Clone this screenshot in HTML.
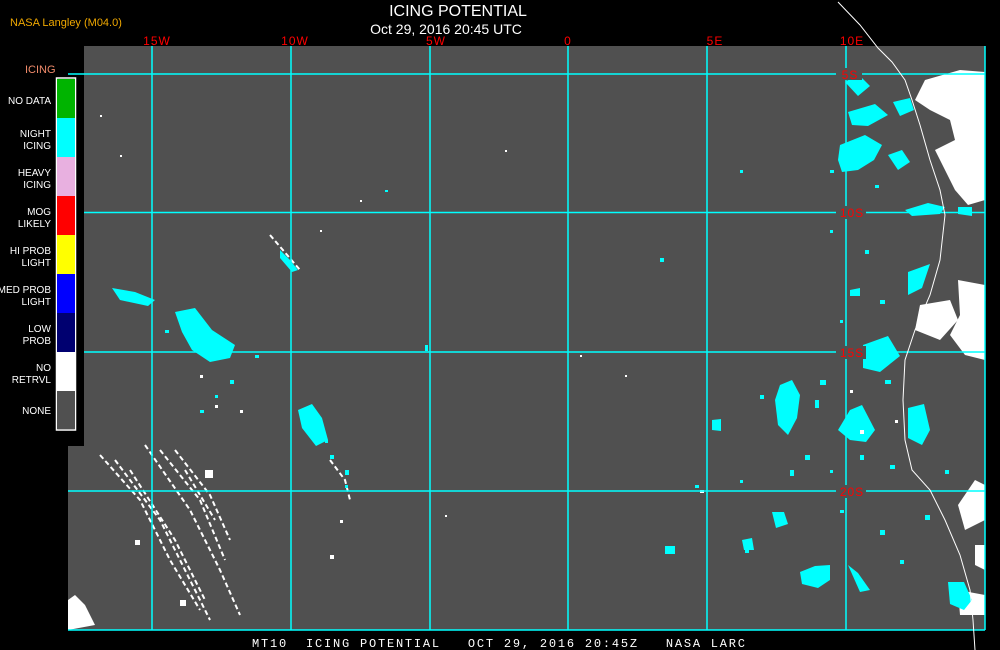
<!DOCTYPE html>
<html><head><meta charset="utf-8"><style>
html,body{margin:0;padding:0;background:#000;width:1000px;height:650px;overflow:hidden}
svg{display:block}
text{font-family:"Liberation Sans",sans-serif}
</style></head><body>
<svg width="1000" height="650" viewBox="0 0 1000 650" xmlns="http://www.w3.org/2000/svg">
<rect width="1000" height="650" fill="#000"/>
<path d="M84 46 H985 V630 H68 V446 H84 Z" fill="#505050"/>
<g fill="#fff">
<path d="M925 80 L960 70 L985 72 L985 200 L968 205 L955 190 L945 170 L935 150 L955 140 L950 120 L930 110 L915 100 Z"/>
<path d="M958 280 L985 285 L985 360 L965 355 L950 335 L960 315 Z"/>
<path d="M920 305 L950 300 L958 320 L940 340 L915 330 Z"/>
<path d="M975 480 L985 485 L985 520 L965 530 L958 505 Z"/>
<path d="M975 545 L985 545 L985 570 L975 565 Z"/>
<path d="M958 590 L985 595 L985 615 L960 615 Z"/>
<path d="M68 600 L75 595 L85 605 L95 625 L68 630 Z"/>
</g>
<g stroke="#fff" stroke-width="2" fill="none" stroke-dasharray="5 3">
<path d="M100 455 L140 500 L170 560 L200 610"/>
<path d="M115 460 L160 520 L190 580 L210 620"/>
<path d="M145 445 L190 510 L220 570 L240 615"/>
<path d="M160 450 L200 500 L225 560"/>
<path d="M130 470 L175 540 L205 600"/>
<path d="M185 470 L215 520"/>
<path d="M175 450 L210 495 L230 540"/>
<path d="M270 235 L300 270"/>
<path d="M955 330 L985 300"/>
<path d="M330 460 L345 480 L350 500"/>
</g>
<g fill="#0ff">
<path d="M298 410 L312 404 L322 418 L328 440 L316 446 L302 428 Z"/>
<path d="M780 385 L792 380 L800 395 L797 418 L788 435 L778 425 L775 400 Z"/>
<path d="M838 430 L850 410 L862 405 L875 430 L866 442 L850 440 Z"/>
<path d="M800 572 L815 566 L830 565 L830 580 L818 588 L802 584 Z"/>
<path d="M845 82 L858 74 L870 86 L858 96 Z"/>
<path d="M848 112 L875 104 L888 115 L868 126 L852 125 Z"/>
<path d="M840 145 L865 135 L882 145 L874 160 L858 170 L842 172 L838 160 Z"/>
<path d="M888 155 L902 150 L910 162 L898 170 Z"/>
<path d="M893 102 L910 98 L914 110 L900 116 Z"/>
<path d="M905 210 L928 203 L945 207 L940 214 L912 216 Z"/>
<path d="M958 207 L972 207 L972 216 L958 214 Z"/>
<path d="M908 272 L930 264 L922 288 L908 295 Z"/>
<path d="M863 345 L888 336 L900 356 L880 372 L863 368 Z"/>
<path d="M908 408 L924 404 L930 430 L922 445 L908 438 Z"/>
<path d="M772 512 L784 512 L788 524 L776 528 Z"/>
<path d="M742 540 L752 538 L754 550 L744 550 Z"/>
<path d="M848 565 L858 573 L870 590 L860 592 Z"/>
<path d="M948 582 L964 582 L972 600 L964 610 L950 604 Z"/>
<path d="M175 312 L195 308 L212 330 L235 345 L230 358 L210 362 L192 350 L182 332 Z"/>
<path d="M112 288 L135 292 L155 300 L148 306 L120 300 Z"/>
<path d="M665 546 L675 546 L675 554 L665 554 Z"/>
<path d="M712 420 L721 419 L721 431 L712 430 Z"/>
<path d="M280 250 L290 260 L298 270 L292 272 L280 258 Z"/>
<path d="M850 290 L860 288 L860 296 L850 296 Z"/>
</g>
<g fill="#0ff">
<rect x="820" y="380" width="6" height="5"/><rect x="815" y="400" width="4" height="8"/><rect x="760" y="395" width="4" height="4"/>
<rect x="805" y="455" width="5" height="5"/><rect x="830" y="470" width="3" height="3"/><rect x="885" y="380" width="6" height="4"/>
<rect x="890" y="465" width="5" height="4"/><rect x="860" y="455" width="4" height="5"/><rect x="740" y="480" width="3" height="3"/>
<rect x="790" y="470" width="4" height="6"/><rect x="840" y="510" width="4" height="3"/><rect x="880" y="530" width="5" height="5"/>
<rect x="900" y="560" width="4" height="4"/><rect x="925" y="515" width="5" height="5"/><rect x="945" y="470" width="4" height="4"/>
<rect x="865" y="250" width="4" height="4"/><rect x="880" y="300" width="5" height="4"/><rect x="840" y="320" width="3" height="3"/>
<rect x="830" y="230" width="3" height="3"/><rect x="875" y="185" width="4" height="3"/><rect x="830" y="170" width="4" height="3"/>
<rect x="230" y="380" width="4" height="4"/><rect x="215" y="395" width="3" height="3"/><rect x="200" y="410" width="4" height="3"/>
<rect x="255" y="355" width="4" height="3"/><rect x="165" y="330" width="4" height="3"/><rect x="330" y="455" width="4" height="4"/>
<rect x="345" y="470" width="4" height="5"/><rect x="345" y="485" width="3" height="3"/><rect x="325" y="440" width="3" height="3"/>
<rect x="660" y="258" width="4" height="4"/><rect x="385" y="190" width="3" height="2"/><rect x="740" y="170" width="3" height="3"/>
<rect x="425" y="345" width="3" height="6"/><rect x="695" y="485" width="4" height="3"/><rect x="745" y="550" width="4" height="3"/>
</g>
<g fill="#fff">
<rect x="120" y="155" width="2" height="2"/><rect x="100" y="115" width="2" height="2"/><rect x="505" y="150" width="2" height="2"/>
<rect x="320" y="230" width="2" height="2"/><rect x="360" y="200" width="2" height="2"/><rect x="445" y="515" width="2" height="2"/>
<rect x="330" y="555" width="4" height="4"/><rect x="340" y="520" width="3" height="3"/><rect x="180" y="600" width="6" height="6"/>
<rect x="205" y="470" width="8" height="8"/><rect x="135" y="540" width="5" height="5"/><rect x="580" y="355" width="2" height="2"/>
<rect x="700" y="490" width="4" height="3"/><rect x="625" y="375" width="2" height="2"/>
<rect x="860" y="430" width="4" height="4"/><rect x="895" y="420" width="3" height="3"/><rect x="850" y="390" width="3" height="3"/>
<rect x="200" y="375" width="3" height="3"/><rect x="215" y="405" width="3" height="3"/><rect x="240" y="410" width="3" height="3"/>
</g>
<g stroke="#0ff" stroke-width="1.5">
<line x1="68" y1="74" x2="985" y2="74"/><line x1="84" y1="212.5" x2="985" y2="212.5"/>
<line x1="84" y1="352" x2="985" y2="352"/><line x1="68" y1="491" x2="985" y2="491"/>
<line x1="68" y1="630" x2="985" y2="630"/>
<line x1="152" y1="46" x2="152" y2="630"/><line x1="291" y1="46" x2="291" y2="630"/>
<line x1="430" y1="46" x2="430" y2="630"/><line x1="568" y1="46" x2="568" y2="630"/>
<line x1="707" y1="46" x2="707" y2="630"/><line x1="846" y1="46" x2="846" y2="630"/>
<line x1="985" y1="46" x2="985" y2="630"/>
</g>
<path d="M838 2 L860 25 L878 48 L892 62 L905 80 L912 100 L920 125 L930 160 L940 190 L945 215 L940 260 L930 295 L915 330 L905 360 L903 400 L905 440 L912 470 L930 490 L945 520 L960 555 L970 590 L973 620 L975 650" stroke="#fff" stroke-width="1" fill="none"/>
<g fill="#505050">
<rect x="836" y="68" width="26" height="12"/><rect x="836" y="206" width="30" height="13"/><rect x="836" y="346" width="30" height="13"/><rect x="836" y="485" width="30" height="13"/>
</g>
<g fill="#f00" font-size="12" text-anchor="middle" letter-spacing="1">
<text x="157" y="45">15W</text><text x="295" y="45">10W</text><text x="436" y="45">5W</text>
<text x="568" y="45">0</text><text x="715" y="45">5E</text><text x="852" y="45">10E</text>
<text x="850" y="79">5S</text><text x="852" y="217">10S</text><text x="852" y="357">15S</text><text x="852" y="496">20S</text>
</g>
<text x="10" y="26" fill="#f0a800" font-size="11">NASA Langley (M04.0)</text>
<text x="458" y="16" fill="#fff" font-size="16" text-anchor="middle">ICING POTENTIAL</text>
<text x="446" y="34" fill="#fff" font-size="14" text-anchor="middle">Oct 29, 2016 20:45 UTC</text>
<text x="25" y="73" fill="#f08a6a" font-size="11">ICING</text>
<rect x="56.5" y="78" width="19" height="352" fill="none" stroke="#fff" stroke-width="1.5"/>
<rect x="57" y="79" width="18" height="39" fill="#00b400"/>
<rect x="57" y="118" width="18" height="39" fill="#00ffff"/>
<rect x="57" y="157" width="18" height="39" fill="#e8b0e0"/>
<rect x="57" y="196" width="18" height="39" fill="#ff0000"/>
<rect x="57" y="235" width="18" height="39" fill="#ffff00"/>
<rect x="57" y="274" width="18" height="39" fill="#0000ff"/>
<rect x="57" y="313" width="18" height="39" fill="#000070"/>
<rect x="57" y="352" width="18" height="39" fill="#ffffff"/>
<rect x="57" y="391" width="18" height="38" fill="#505050"/>
<g fill="#fff" font-size="10" text-anchor="end">
<text x="51" y="104">NO DATA</text>
<text x="51" y="137">NIGHT</text><text x="51" y="149">ICING</text>
<text x="51" y="176">HEAVY</text><text x="51" y="188">ICING</text>
<text x="51" y="215">MOG</text><text x="51" y="227">LIKELY</text>
<text x="51" y="254">HI PROB</text><text x="51" y="266">LIGHT</text>
<text x="51" y="293">MED PROB</text><text x="51" y="305">LIGHT</text>
<text x="51" y="332">LOW</text><text x="51" y="344">PROB</text>
<text x="51" y="371">NO</text><text x="51" y="383">RETRVL</text>
<text x="51" y="414">NONE</text>
</g>
<text x="252" y="647" fill="#fff" font-size="12" xml:space="preserve" textLength="493" lengthAdjust="spacing" style="font-family:'Liberation Mono',monospace">MT10  ICING POTENTIAL   OCT 29, 2016 20:45Z   NASA LARC</text>
</svg>
</body></html>
